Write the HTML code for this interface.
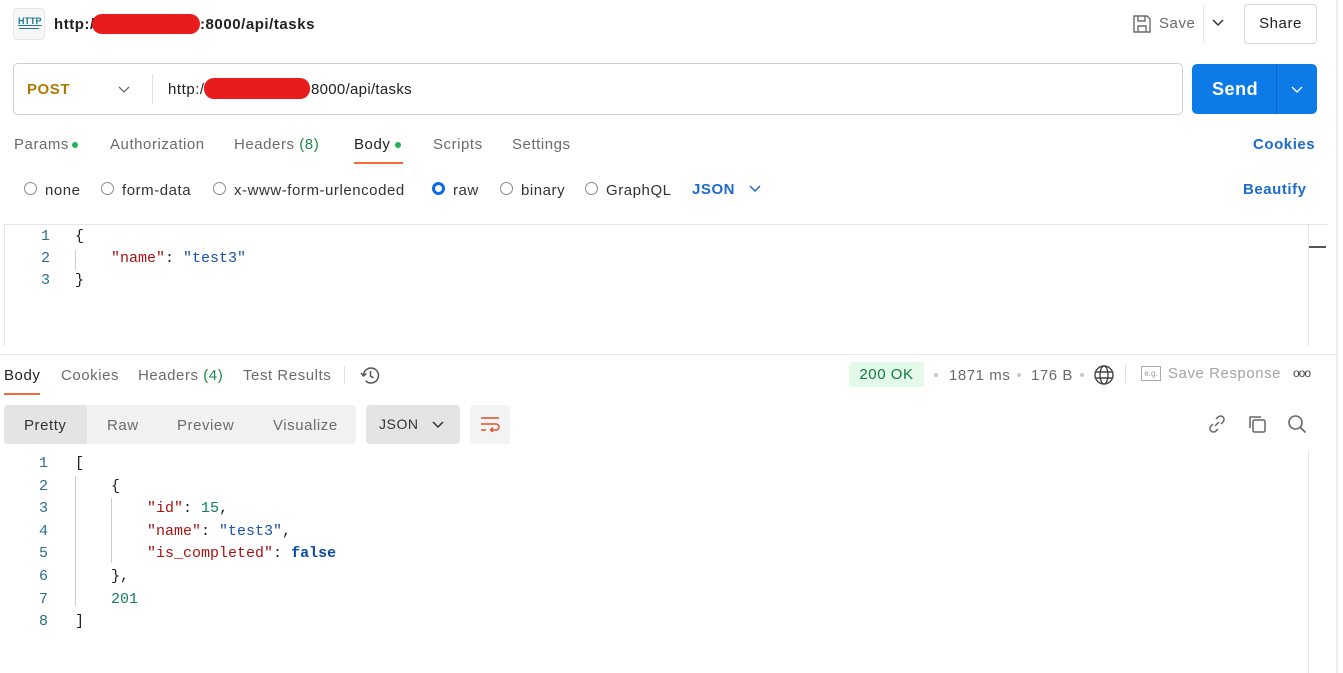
<!DOCTYPE html>
<html><head><meta charset="utf-8"><style>
*{box-sizing:border-box;margin:0;padding:0}
body{width:1343px;height:673px;background:#fff;font-family:"Liberation Sans",sans-serif;color:#212121;position:relative;overflow:hidden;font-size:14px;letter-spacing:0.55px}
.a{position:absolute;white-space:nowrap}
.mono{font-family:"Liberation Mono",monospace;font-size:15px;letter-spacing:0}
.ln{color:#2a6f8f;width:30px;text-align:right}
.red{background:#e81c1c;border-radius:10px;position:absolute}
.g{color:#6b6b6b}
.radio{position:absolute;width:13px;height:13px;border:1px solid #8a8a8a;border-radius:50%}
.dot{position:absolute;width:4px;height:4px;border-radius:50%;background:#c8c8c8}
</style></head><body>
<div class="a" style="left:13px;top:8px;width:32px;height:32px;border:1px solid #e6e6e6;border-radius:4px;background:#f7f7f7"></div>
<div class="a" style="left:18px;top:16px;font-size:9px;font-weight:bold;color:#1b7b8f;text-decoration:underline;letter-spacing:0">HTTP</div>
<div class="a" style="left:19px;top:28px;width:20px;height:1px;background:#1b7b8f"></div>
<div class="a" style="left:54px;top:16px;font-size:15px;font-weight:bold">http:/</div>
<div class="red" style="left:92px;top:14px;width:108px;height:20px"></div>
<div class="a" style="left:200px;top:16px;font-size:15px;font-weight:bold">:8000/api/tasks</div>
<svg class="a" style="left:1132px;top:14px" width="20" height="20" viewBox="0 0 20 20" fill="none" stroke="#6b6b6b" stroke-width="1.4"><path d="M2 2h13l3 3v13H2z"/><path d="M6 2v5h7V2M6 18v-6h8v6"/></svg>
<div class="a g" style="left:1159px;top:15px;font-size:15px">Save</div>
<div class="a" style="left:1203px;top:5px;width:1px;height:38px;background:#e6e6e6"></div>
<svg class="a" style="left:1212px;top:19px" width="12" height="8"><path d="M1 1l5 5 5-5" stroke="#333" stroke-width="1.5" fill="none"/></svg>
<div class="a" style="left:1244px;top:4px;width:73px;height:40px;border:1px solid #d6d6d6;border-radius:4px;text-align:center;line-height:38px;font-size:15px">Share</div>
<div class="a" style="left:1336px;top:0;width:2px;height:673px;background:#eee"></div>
<div class="a" style="left:13px;top:63px;width:1170px;height:52px;border:1px solid #cfcfcf;border-radius:5px"></div>
<div class="a" style="left:27px;top:81px;font-size:15px;font-weight:bold;color:#ad7a03">POST</div>
<svg class="a" style="left:118px;top:86px" width="12" height="8"><path d="M1 1l5 5 5-5" stroke="#666" stroke-width="1.3" fill="none"/></svg>
<div class="a" style="left:152px;top:74px;width:1px;height:30px;background:#e0e0e0"></div>
<div class="a" style="left:168px;top:81px;font-size:15px">http:/</div>
<div class="red" style="left:204px;top:78px;width:106px;height:21px"></div>
<div class="a" style="left:311px;top:81px;font-size:15px;letter-spacing:0.3px">8000/api/tasks</div>
<div class="a" style="left:1192px;top:64px;width:125px;height:50px;background:#0c7be8;border-radius:5px"></div>
<div class="a" style="left:1276px;top:64px;width:1px;height:50px;background:#0a64c2"></div>
<div class="a" style="left:1212px;top:79px;color:#fff;font-size:18px;font-weight:bold">Send</div>
<svg class="a" style="left:1291px;top:86px" width="12" height="8"><path d="M1 1l5 5 5-5" stroke="#fff" stroke-width="1.4" fill="none"/></svg>
<div class="a g" style="left:14px;top:136px;font-size:15px">Params</div>
<div class="a" style="left:72px;top:142px;width:6px;height:6px;border-radius:50%;background:#1fb454"></div>
<div class="a g" style="left:110px;top:136px;font-size:15px">Authorization</div>
<div class="a g" style="left:234px;top:136px;font-size:15px">Headers <span style="color:#1f8a4c">(8)</span></div>
<div class="a" style="left:354px;top:136px;font-size:15px">Body</div>
<div class="a" style="left:395px;top:142px;width:6px;height:6px;border-radius:50%;background:#1fb454"></div>
<div class="a" style="left:354px;top:162px;width:49px;height:2px;background:#f26b3a"></div>
<div class="a g" style="left:433px;top:136px;font-size:15px">Scripts</div>
<div class="a g" style="left:512px;top:136px;font-size:15px">Settings</div>
<div class="a" style="left:1253px;top:136px;font-size:15px;font-weight:bold;color:#1d6ad0">Cookies</div>
<div class="radio" style="left:24px;top:182px"></div><div class="a" style="left:45px;top:182px;font-size:15px;color:#333">none</div>
<div class="radio" style="left:101px;top:182px"></div><div class="a" style="left:122px;top:182px;font-size:15px;color:#333">form-data</div>
<div class="radio" style="left:213px;top:182px"></div><div class="a" style="left:234px;top:182px;font-size:15px;color:#333">x-www-form-urlencoded</div>
<div class="radio" style="left:432px;top:182px;border:3px solid #0c6be0"></div><div class="a" style="left:453px;top:182px;font-size:15px;color:#333">raw</div>
<div class="radio" style="left:500px;top:182px"></div><div class="a" style="left:521px;top:182px;font-size:15px;color:#333">binary</div>
<div class="radio" style="left:585px;top:182px"></div><div class="a" style="left:606px;top:182px;font-size:15px;color:#333">GraphQL</div>
<div class="a" style="left:692px;top:181px;font-size:15px;font-weight:bold;color:#1d6ad0">JSON</div>
<svg class="a" style="left:749px;top:185px" width="12" height="8"><path d="M1 1l5 5 5-5" stroke="#1d6ad0" stroke-width="1.5" fill="none"/></svg>
<div class="a" style="left:1243px;top:181px;font-size:15px;font-weight:bold;color:#1d6ad0">Beautify</div>
<div class="a" style="left:4px;top:224px;width:1323px;height:1px;background:#e6e6e6"></div>
<div class="a" style="left:4px;top:224px;width:1px;height:122px;background:#e6e6e6"></div>
<div class="a" style="left:1308px;top:224px;width:1px;height:122px;background:#e6e6e6"></div>
<div class="a" style="left:1309px;top:246px;width:17px;height:2px;background:#555"></div>
<div class="a mono ln" style="left:20px;top:228px">1</div>
<div class="a mono ln" style="left:20px;top:250px">2</div>
<div class="a mono ln" style="left:20px;top:272px">3</div>
<div class="a mono" style="left:75px;top:228px">{</div>
<div class="a" style="left:75px;top:250px;width:1px;height:20px;background:#ccc"></div>
<div class="a mono" style="left:111px;top:250px"><span style="color:#a11">"name"</span>: <span style="color:#1a50b0">"test3"</span></div>
<div class="a mono" style="left:75px;top:272px">}</div>
<div class="a" style="left:0;top:354px;width:1336px;height:1px;background:#e6e6e6"></div>
<div class="a" style="left:4px;top:367px;font-size:15px">Body</div>
<div class="a" style="left:4px;top:393px;width:36px;height:2px;background:#f26b3a"></div>
<div class="a g" style="left:61px;top:367px;font-size:15px">Cookies</div>
<div class="a g" style="left:138px;top:367px;font-size:15px">Headers <span style="color:#1f8a4c">(4)</span></div>
<div class="a g" style="left:243px;top:367px;font-size:15px">Test Results</div>
<div class="a" style="left:344px;top:366px;width:1px;height:18px;background:#e0e0e0"></div>
<svg class="a" style="left:360px;top:365px" width="21" height="21" viewBox="0 0 21 21" fill="none" stroke="#555" stroke-width="1.5"><path d="M3.5 10.5a7.5 7.5 0 1 1 2.2 5.3"/><path d="M1 8l2.5 3 3-2.5"/><path d="M10.5 6v5l3 2"/></svg>
<div class="a" style="left:849px;top:362px;width:75px;height:25px;background:#e3faeb;border-radius:3px;color:#127a3b;font-size:15px;line-height:25px;text-align:center">200 OK</div>
<div class="dot" style="left:934px;top:373px"></div>
<div class="a g" style="left:949px;top:367px;font-size:15px">1871 ms</div>
<div class="dot" style="left:1017px;top:373px"></div>
<div class="a g" style="left:1031px;top:367px;font-size:15px">176 B</div>
<div class="dot" style="left:1080px;top:373px"></div>
<svg class="a" style="left:1094px;top:365px" width="20" height="20" viewBox="0 0 20 20" fill="none" stroke="#444" stroke-width="1.4"><circle cx="10" cy="10" r="9"/><ellipse cx="10" cy="10" rx="4" ry="9"/><path d="M1.5 7h17M1.5 13h17"/></svg>
<div class="a" style="left:1125px;top:365px;width:1px;height:18px;background:#ddd"></div>
<div class="a" style="left:1141px;top:366px;width:20px;height:15px;border:1px solid #aaa;font-size:8px;color:#999;text-align:center;line-height:13px;letter-spacing:0">e.g.</div>
<div class="a" style="left:1168px;top:365px;font-size:15px;color:#a5a5a5">Save Response</div>
<div class="a" style="left:1293px;top:366px;font-size:12px;color:#444;letter-spacing:-1px">ooo</div>
<div class="a" style="left:4px;top:405px;width:352px;height:39px;background:#f1f1f1;border-radius:4px"></div>
<div class="a" style="left:4px;top:405px;width:83px;height:39px;background:#e4e4e4;border-radius:4px 0 0 4px"></div>
<div class="a" style="left:24px;top:417px;font-size:15px;color:#333">Pretty</div>
<div class="a g" style="left:107px;top:417px;font-size:15px">Raw</div>
<div class="a g" style="left:177px;top:417px;font-size:15px">Preview</div>
<div class="a g" style="left:273px;top:417px;font-size:15px">Visualize</div>
<div class="a" style="left:366px;top:405px;width:94px;height:39px;background:#e4e4e4;border-radius:4px"></div>
<div class="a" style="left:379px;top:416px;font-size:14px;color:#333">JSON</div>
<svg class="a" style="left:432px;top:421px" width="12" height="8"><path d="M1 1l5 5 5-5" stroke="#333" stroke-width="1.5" fill="none"/></svg>
<div class="a" style="left:470px;top:405px;width:40px;height:39px;background:#f3f3f3;border-radius:4px"></div>
<svg class="a" style="left:480px;top:416px" width="20" height="16" viewBox="0 0 20 16" fill="none" stroke="#e0532a" stroke-width="1.5"><path d="M1 2h18M1 8h15a3 3 0 0 1 0 6h-5M13 11.5l-2.5 2.5 2.5 2"/><path d="M1 14h5"/></svg>
<svg class="a" style="left:1207px;top:414px" width="20" height="20" viewBox="0 0 20 20" fill="none" stroke="#666" stroke-width="1.5"><path d="M8 12l4-4M9 5l2-2a3.5 3.5 0 0 1 5 5l-2 2M11 15l-2 2a3.5 3.5 0 0 1-5-5l2-2"/></svg>
<svg class="a" style="left:1247px;top:414px" width="20" height="20" viewBox="0 0 20 20" fill="none" stroke="#666" stroke-width="1.5"><rect x="6" y="6" width="12" height="12" rx="1.5"/><path d="M3 14V3h11"/></svg>
<svg class="a" style="left:1287px;top:414px" width="20" height="20" viewBox="0 0 20 20" fill="none" stroke="#666" stroke-width="1.6"><circle cx="8.5" cy="8.5" r="6.5"/><path d="M13.5 13.5l5 5"/></svg>
<div class="a" style="left:1308px;top:450px;width:1px;height:223px;background:#e6e6e6"></div>
<div class="a mono ln" style="left:18px;top:453px;line-height:22.6px;white-space:pre">1
2
3
4
5
6
7
8</div>
<div class="a" style="left:75px;top:476px;width:1px;height:130px;background:#ccc"></div>
<div class="a" style="left:111px;top:498px;width:1px;height:65px;background:#ccc"></div>
<div class="a mono" style="left:75px;top:453px;line-height:22.6px;white-space:pre">[
    {
        <span style="color:#a11">"id"</span>: <span style="color:#128059">15</span>,
        <span style="color:#a11">"name"</span>: <span style="color:#1a50b0">"test3"</span>,
        <span style="color:#a11">"is_completed"</span>: <b style="color:#0b4aa0">false</b>
    },
    <span style="color:#128059">201</span>
]</div>
</body></html>
